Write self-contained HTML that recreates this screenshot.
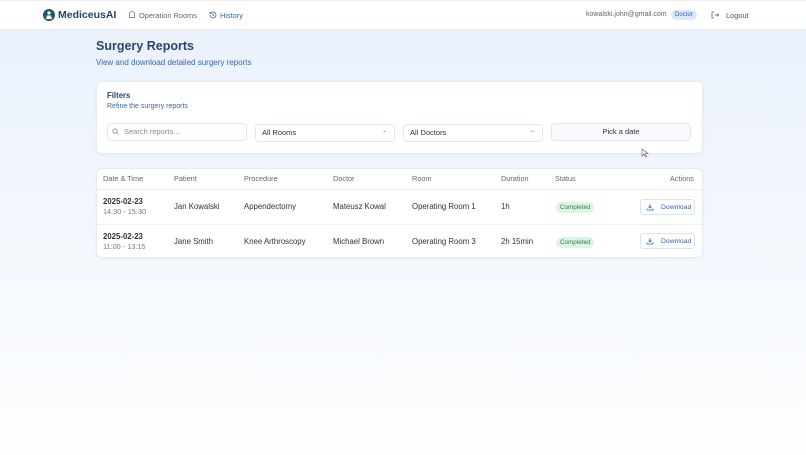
<!DOCTYPE html>
<html><head><meta charset="utf-8"><style>
*{box-sizing:border-box;margin:0;padding:0}
body{width:806px;height:455px;overflow:hidden;font-family:"Liberation Sans",sans-serif;background:linear-gradient(180deg,#e9f1fb 0%,#f3f7fd 50%,#fdfeff 100%);position:relative;color:#333}
.hdr{position:absolute;left:0;top:0;width:806px;height:30px;background:#fff;border-bottom:1px solid #e6ebf2;border-top:1px solid #eee}
.abs{position:absolute;white-space:nowrap}
.card{position:absolute;background:#fff;border:1px solid #e6ebf2;border-radius:6px;box-shadow:0 1px 3px rgba(0,0,0,.04)}
.inp{position:absolute;height:18px;border:1px solid #e3e7ee;border-radius:4px;font-size:7.5px;color:#333;line-height:16px;padding-left:6px;background:#fff}
.th{font-size:7.3px;color:#666}
.td{font-size:7.8px;color:#333}
.badge{position:absolute;left:556px;font-size:6.3px;color:#2e7d4a;background:#dcf5e4;border-radius:7px;padding:2px 4px}
.btn{position:absolute;left:640px;width:55px;height:16px;border:1px solid #dbe3ee;border-radius:3px;font-size:6.8px;color:#3a5fb0;line-height:14px;padding-left:20px;background:#fff}
</style></head><body>
<div class="hdr"></div>
<svg class="abs" style="left:43px;top:9px" width="12" height="12" viewBox="0 0 12 12"><circle cx="6" cy="6" r="6" fill="#24566b"/><circle cx="6" cy="4" r="1.6" fill="#fff"/><path d="M3 10 L4 6.5 H8 L9 10" fill="#fff"/></svg>
<div class="abs" style="left:58px;top:9px;font-size:10.5px;font-weight:bold;color:#26426e">MediceusAI</div>
<svg class="abs" style="left:128px;top:11px" width="8" height="8" viewBox="0 0 8 8" fill="none" stroke="#777" stroke-width=".8"><path d="M1.5 6.5V3a2.5 2.5 0 015 0v3.5M1 6.5h6"/></svg>
<div class="abs" style="left:139px;top:11px;font-size:7.4px;color:#666">Operation Rooms</div>
<svg class="abs" style="left:209px;top:11px" width="8" height="8" viewBox="0 0 8 8" fill="none" stroke="#3a5fb0" stroke-width=".8"><path d="M1 4a3 3 0 103-3 3 3 0 00-2.2 1M1 1v1.5h1.5M4 2.5V4l1 1"/></svg>
<div class="abs" style="left:220px;top:11px;font-size:7.4px;color:#3a5fb0">History</div>
<div class="abs" style="left:586px;top:11px;font-size:7px;color:#666">kowalski.john@gmail.com</div>
<div class="abs" style="left:671px;top:10px;font-size:6px;color:#3a5fb0;background:#dbe7fa;border-radius:6px;padding:2px 4px">Doctor</div>
<svg class="abs" style="left:711px;top:11px" width="8" height="8" viewBox="0 0 8 8" fill="none" stroke="#666" stroke-width=".8"><path d="M3 1H1v6h2M3.5 4H7.5M6 2.5L7.5 4 6 5.5"/></svg>
<div class="abs" style="left:726px;top:11px;font-size:7.4px;color:#555">Logout</div>
<div class="abs" style="left:96px;top:39px;font-size:12.5px;font-weight:bold;color:#2c4372">Surgery Reports</div>
<div class="abs" style="left:96px;top:58px;font-size:8px;color:#3a63b4">View and download detailed surgery reports</div>
<div class="card" style="left:96px;top:81px;width:607px;height:73px"></div>
<div class="abs" style="left:107px;top:91px;font-size:7.8px;font-weight:bold;color:#2c4372">Filters</div>
<div class="abs" style="left:107px;top:103px;font-size:7px;color:#3a63b4">Refine the surgery reports</div>
<div class="inp" style="left:107px;top:123px;width:140px;padding-left:16px;color:#888">Search reports...</div>
<svg class="abs" style="left:112px;top:128px" width="7" height="7" viewBox="0 0 7 7" fill="none" stroke="#888" stroke-width=".8"><circle cx="3" cy="3" r="2.2"/><path d="M4.6 4.6L6.5 6.5"/></svg>
<div class="inp" style="left:255px;top:124px;width:140px">All Rooms</div>
<div class="abs" style="left:382px;top:127px;font-size:6px;color:#888">⌄</div>
<div class="inp" style="left:403px;top:124px;width:140px">All Doctors</div>
<div class="abs" style="left:530px;top:127px;font-size:6px;color:#888">⌄</div>
<div class="inp" style="left:551px;top:123px;width:140px;background:#f7f9fc;text-align:center;padding:0">Pick a date</div>
<div class="card" style="left:96px;top:168px;width:607px;height:90px"></div>
<div class="abs" style="left:97px;top:189px;width:605px;border-top:1px solid #edf0f4"></div>
<div class="abs" style="left:97px;top:224px;width:605px;border-top:1px solid #edf0f4"></div>
<div class="abs th" style="left:103px;top:174px">Date &amp; Time</div>
<div class="abs th" style="left:174px;top:174px">Patient</div>
<div class="abs th" style="left:244px;top:174px">Procedure</div>
<div class="abs th" style="left:333px;top:174px">Doctor</div>
<div class="abs th" style="left:412px;top:174px">Room</div>
<div class="abs th" style="left:501px;top:174px">Duration</div>
<div class="abs th" style="left:555px;top:174px">Status</div>
<div class="abs th" style="left:670px;top:174px">Actions</div>

<div class="abs td" style="left:103px;top:197px;font-weight:bold">2025-02-23</div>
<div class="abs" style="left:103px;top:207px;font-size:7.3px;color:#777">14:30 - 15:30</div>
<div class="abs td" style="left:174px;top:202px">Jan Kowalski</div>
<div class="abs td" style="left:244px;top:202px">Appendectomy</div>
<div class="abs td" style="left:333px;top:202px">Mateusz Kowal</div>
<div class="abs td" style="left:412px;top:202px">Operating Room 1</div>
<div class="abs td" style="left:501px;top:202px">1h</div>
<div class="badge" style="top:202px">Completed</div>
<div class="btn" style="top:199px;padding-top:1px">Download</div>
<svg class="abs" style="left:646px;top:203px" width="8" height="8" viewBox="0 0 8 8" fill="none" stroke="#3a5fb0" stroke-width=".8"><path d="M4 1v4M2.5 3.5L4 5l1.5-1.5M1 5.5V7h6V5.5"/></svg>

<div class="abs td" style="left:103px;top:232px;font-weight:bold">2025-02-23</div>
<div class="abs" style="left:103px;top:242px;font-size:7.3px;color:#777">11:00 - 13:15</div>
<div class="abs td" style="left:174px;top:237px">Jane Smith</div>
<div class="abs td" style="left:244px;top:237px">Knee Arthroscopy</div>
<div class="abs td" style="left:333px;top:237px">Michael Brown</div>
<div class="abs td" style="left:412px;top:237px">Operating Room 3</div>
<div class="abs td" style="left:501px;top:237px">2h 15min</div>
<div class="badge" style="top:237px">Completed</div>
<div class="btn" style="top:233px;padding-top:1px">Download</div>
<svg class="abs" style="left:646px;top:237px" width="8" height="8" viewBox="0 0 8 8" fill="none" stroke="#3a5fb0" stroke-width=".8"><path d="M4 1v4M2.5 3.5L4 5l1.5-1.5M1 5.5V7h6V5.5"/></svg>
<svg class="abs" style="left:641px;top:148px" width="8" height="10" viewBox="0 0 8 10"><path d="M1 1v7l2-2 1.5 3 1-.5L4 5.5h3z" fill="#fff" stroke="#555" stroke-width=".6"/></svg>
</body></html>
